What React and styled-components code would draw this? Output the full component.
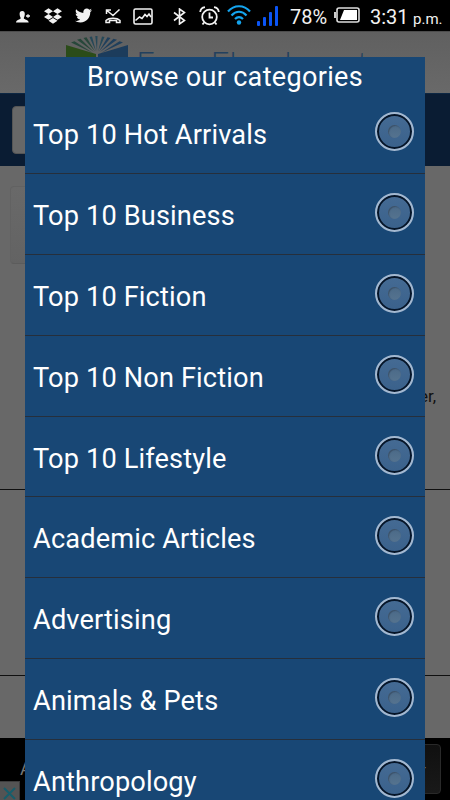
import React from "react";
import styled, { createGlobalStyle } from "styled-components";
import { FaDropbox, FaTwitter } from "react-icons/fa";

const GlobalStyle = createGlobalStyle`
  * {
    box-sizing: border-box;
  }
  body {
    margin: 0;
    background-color: #686868;
    font-family: Roboto, "Liberation Sans", sans-serif;
    overflow: hidden;
  }
`;

const Container = styled.div`
  position: relative;
  width: 450px;
  height: 800px;
  display: flex;
  flex-direction: column;
  overflow: hidden;
  background-color: #686868;
`;

const StatusBar = styled.div`
  height: 31px;
  flex: none;
  display: flex;
  align-items: center;
  background-color: #000;
  color: #f2f2f2;
`;

const Slot = styled.span`
  flex: none;
  display: flex;
  align-items: center;
  width: ${(props) => props.width}px;
  margin-left: ${(props) => props.gap || 0}px;
  margin-top: ${(props) => props.drop || 0}px;
  svg {
    display: block;
  }
`;

const StatusText = styled.span`
  flex: none;
  width: ${(props) => props.width}px;
  margin-left: ${(props) => props.gap}px;
  margin-top: ${(props) => props.drop || 0}px;
  font-size: ${(props) => props.size}px;
  line-height: 24px;
  white-space: nowrap;
`;

const Header = styled.header`
  height: 62px;
  flex: none;
  display: flex;
  padding: 4px 0 0 66px;
  border-top: 1px solid #4d4d4d;
  background: linear-gradient(#606060, #696969);
`;

const Brand = styled.span`
  margin: 7px 0 0 8px;
  color: #22405e;
  font-family: Lato, sans-serif;
  font-weight: 300;
  font-size: 33px;
  line-height: 40px;
  white-space: nowrap;
`;

const SearchBar = styled.div`
  height: 73px;
  flex: none;
  padding: 12px;
  border-top: 1px solid #0d2743;
  background-color: #0a1c33;
`;

const SearchBox = styled.div`
  width: 390px;
  height: 48px;
  border: 1px solid #555;
  border-radius: 4px;
  background-color: #686868;
`;

const Page = styled.main`
  flex: 1;
  display: flex;
  flex-direction: column;
  padding-top: 20px;
`;

const Card = styled.div`
  width: 410px;
  height: 78px;
  margin-left: 10px;
  border: 1px solid #626262;
  border-bottom-color: #5c5c5c;
  border-radius: 4px;
  background: linear-gradient(#696969, #636363);
`;

const Excerpt = styled.p`
  height: 104px;
  margin: 121px 14px 0 0;
  color: #101010;
  font-size: 17px;
  line-height: 22px;
  text-align: right;
`;

const Section = styled.div`
  height: ${(props) => props.height}px;
  border-top: 1px solid #101010;
`;

const AdBar = styled.footer`
  height: 62px;
  flex: none;
  display: flex;
  justify-content: space-between;
  background-color: #000;
`;

const AdTitle = styled.span`
  padding: 20px 0 0 20px;
  color: #777;
  font-size: 18px;
`;

const AdButton = styled.div`
  width: 60px;
  height: 50px;
  margin: 6px 9px 0 0;
  padding: 13px 14px 0 0;
  border: 1px solid #292929;
  border-radius: 4px;
  background: linear-gradient(#101010, #191919);
  color: #777;
  text-align: right;
`;

const AdClose = styled.div`
  position: absolute;
  left: 0;
  bottom: 0;
  width: 20px;
  height: 19px;
  padding: 3px;
  border-top: 1px solid #3c3c3c;
  border-right: 1px solid #3c3c3c;
  background-color: #545454;
`;

const Modal = styled.section`
  position: absolute;
  left: 25px;
  top: 57px;
  width: 400px;
  height: 743px;
  overflow: hidden;
  background-color: #184775;
  color: #fff;
`;

const Title = styled.h1`
  height: 36px;
  margin: 0;
  font-size: 27px;
  font-weight: 400;
  letter-spacing: 0.33px;
  line-height: 40px;
  text-align: center;
  white-space: nowrap;
`;

const List = styled.ul`
  margin: 0;
  padding: 0;
  list-style: none;
`;

const Item = styled.li`
  height: 80.9px;
  display: flex;
  align-items: center;
  justify-content: space-between;
  padding: 0 11px 3px 8px;
  border-bottom: 1px solid #262f3b;
`;

const Label = styled.span`
  padding-top: 7px;
  font-size: 27.2px;
  letter-spacing: 0.14px;
  line-height: 32px;
  white-space: nowrap;
`;

const Radio = styled.span`
  width: 39px;
  height: 39px;
  display: flex;
  align-items: center;
  justify-content: center;
  border: 2px solid #a3b8d0;
  border-radius: 50%;
  background: linear-gradient(#456b94, #3a618b);
  box-shadow: inset 0 0 0 2px #061528;
`;

const Dot = styled.span`
  width: 13px;
  height: 13px;
  border-radius: 50%;
  background: linear-gradient(#4b6a88, #55738f);
  box-shadow: inset 1px 1px 1px #3b5169;
`;

const categories = [
  "Top 10 Hot Arrivals",
  "Top 10 Business",
  "Top 10 Fiction",
  "Top 10 Non Fiction",
  "Top 10 Lifestyle",
  "Academic Articles",
  "Advertising",
  "Animals & Pets",
  "Anthropology",
];

const PersonIcon = () => (
  <svg width="15" height="12" viewBox="0 0 15 12" fill="currentColor">
    <path d="M6.200 0c1.800 0 2.600 1.200 2.600 3S8 6.200 7.800 7.200c.2 1.300 4.700 1.300 4.900 4.300H0c.2-3 4.500-3 4.700-4.300C4.400 6.200 3.600 4.800 3.600 3S4.400 0 6.200 0z" />
    <path d="M10 5h4M12 3.200v3.600" stroke="currentColor" strokeWidth="1.300" />
  </svg>
);

const MissedCallIcon = () => (
  <svg width="16" height="15" viewBox="0 0 16 15" fill="none" stroke="currentColor" strokeWidth="1.500">
    <path d="M2 1.500l6 5 6.500-6M1.500 5V1H6" />
    <path d="M1 13.500v-2C4 8.500 12 8.500 15 11.500v2h-3.500v-2h-7v2z" />
  </svg>
);

const PictureIcon = () => (
  <svg width="20" height="17" viewBox="0 0 20 17" fill="none" stroke="currentColor" strokeWidth="1.600">
    <rect x="1" y="1" width="18" height="15" rx="1.500" />
    <path d="M2.500 12.500l4-3.500 2.500 1.500L12 6.500l2 2L16 6l2 3" />
  </svg>
);

const BluetoothIcon = () => (
  <svg width="13" height="17" viewBox="0 0 13 17" fill="none" stroke="currentColor" strokeWidth="1.600">
    <path d="M1 4.500l10.500 8L6.500 16V1l5 3.500L1 12.500" />
  </svg>
);

const AlarmIcon = () => (
  <svg width="21" height="20" viewBox="0 0 21 20" fill="none" stroke="currentColor" strokeWidth="1.800">
    <circle cx="10.500" cy="11" r="7.300" />
    <path d="M10.500 6.500V11.500H14M5 16.500l-1.500 2M16 16.500l1.500 2" />
    <path d="M1.200 6C1.500 3 3.500 1.500 6 1.200M19.800 6c-.3-3-2.300-4.500-4.800-4.800" />
  </svg>
);

const WifiIcon = () => (
  <svg width="24" height="20" viewBox="0 0 24 20" fill="none" stroke="#14a4ee" strokeWidth="2.200">
    <path d="M1 6.500c6-7 16-7 22 0M4.500 10.500c4.500-5 10.500-5 15 0M8 14c2.500-2.600 5.500-2.600 8 0" />
    <circle cx="12" cy="17.500" r="2.200" fill="#14a4ee" stroke="none" />
  </svg>
);

const SignalIcon = () => (
  <svg width="22" height="20" viewBox="0 0 22 20" fill="#0b55f5">
    <rect x="0" y="15" width="3" height="5" rx="1" />
    <rect x="6" y="11" width="3" height="9" rx="1" />
    <rect x="12" y="6" width="3" height="14" rx="1" />
    <rect x="18" y="0" width="3" height="20" rx="1" />
  </svg>
);

const BatteryIcon = () => (
  <svg width="26" height="16" viewBox="0 0 26 16">
    <rect x="3" y="1" width="22" height="14" rx="2" fill="none" stroke="#ddd" strokeWidth="1.600" />
    <path d="M1 5v6" stroke="#ccc" strokeWidth="2" />
    <path d="M10 3h13v10H6z" fill="#fff" />
  </svg>
);

const BookLogo = () => (
  <svg width="62" height="40" viewBox="0 0 62 40">
    <path d="M0 9l30 9v22L0 36z" fill="#2b4c19" />
    <path d="M62 9l-30 9v22l30-4z" fill="#1c3c5c" />
    <path d="M5 6.500l3.500-1.200L27 17zM11 3.800l3.500-1L28 16zM17.500 2l3-.7L29 15.500z" fill="#27473a" />
    <path d="M23.500 1l2.500-.4L30 15.500zM29.300 0h2.200L31 15.500zM36 .6l2.500.4L32 15.500z" fill="#254858" />
    <path d="M41.500 1.300l3 .7L33 15.500zM47.500 2.800l3.500 1L34 16zM53.500 5.300L57 6.500 35 17z" fill="#1f3f5c" />
  </svg>
);

const CloseIcon = () => (
  <svg width="13" height="13" viewBox="0 0 13 13" stroke="#175e6c" strokeWidth="2">
    <path d="M1 1l11 11M12 1L1 12" />
  </svg>
);

const App = () => {
  return (
    <Container>
      <GlobalStyle />
      <StatusBar>
        <Slot width={15} gap={16} drop={3}><PersonIcon /></Slot>
        <Slot width={18} gap={13} drop={1}><FaDropbox size={18} /></Slot>
        <Slot width={17} gap={13}><FaTwitter size={17} /></Slot>
        <Slot width={16} gap={13} drop={1}><MissedCallIcon /></Slot>
        <Slot width={20} gap={12} drop={1}><PictureIcon /></Slot>
        <Slot width={13} gap={20} drop={2}><BluetoothIcon /></Slot>
        <Slot width={21} gap={13}><AlarmIcon /></Slot>
        <Slot width={24} gap={7} drop={-1}><WifiIcon /></Slot>
        <Slot width={22} gap={6}><SignalIcon /></Slot>
        <StatusText width={38} gap={11} size={20} drop={2}>78%</StatusText>
        <Slot width={26} gap={6} drop={-1}><BatteryIcon /></Slot>
        <StatusText width={38} gap={10} size={20} drop={2}>3:31</StatusText>
        <StatusText width={30} gap={5} size={15} drop={6}>p.m.</StatusText>
      </StatusBar>
      <Header>
        <BookLogo />
        <Brand>Free-Ebooks.net</Brand>
      </Header>
      <SearchBar>
        <SearchBox />
      </SearchBar>
      <Page>
        <Card />
        <Excerpt>er,</Excerpt>
        <Section height={186} />
        <Section height={63} />
      </Page>
      <AdBar>
        <AdTitle>A</AdTitle>
        <AdButton>-</AdButton>
      </AdBar>
      <AdClose>
        <CloseIcon />
      </AdClose>
      <Modal>
        <Title>Browse our categories</Title>
        <List>
          {categories.map((category) => (
            <Item key={category}>
              <Label>{category}</Label>
              <Radio>
                <Dot />
              </Radio>
            </Item>
          ))}
        </List>
      </Modal>
    </Container>
  );
};

export default App;
